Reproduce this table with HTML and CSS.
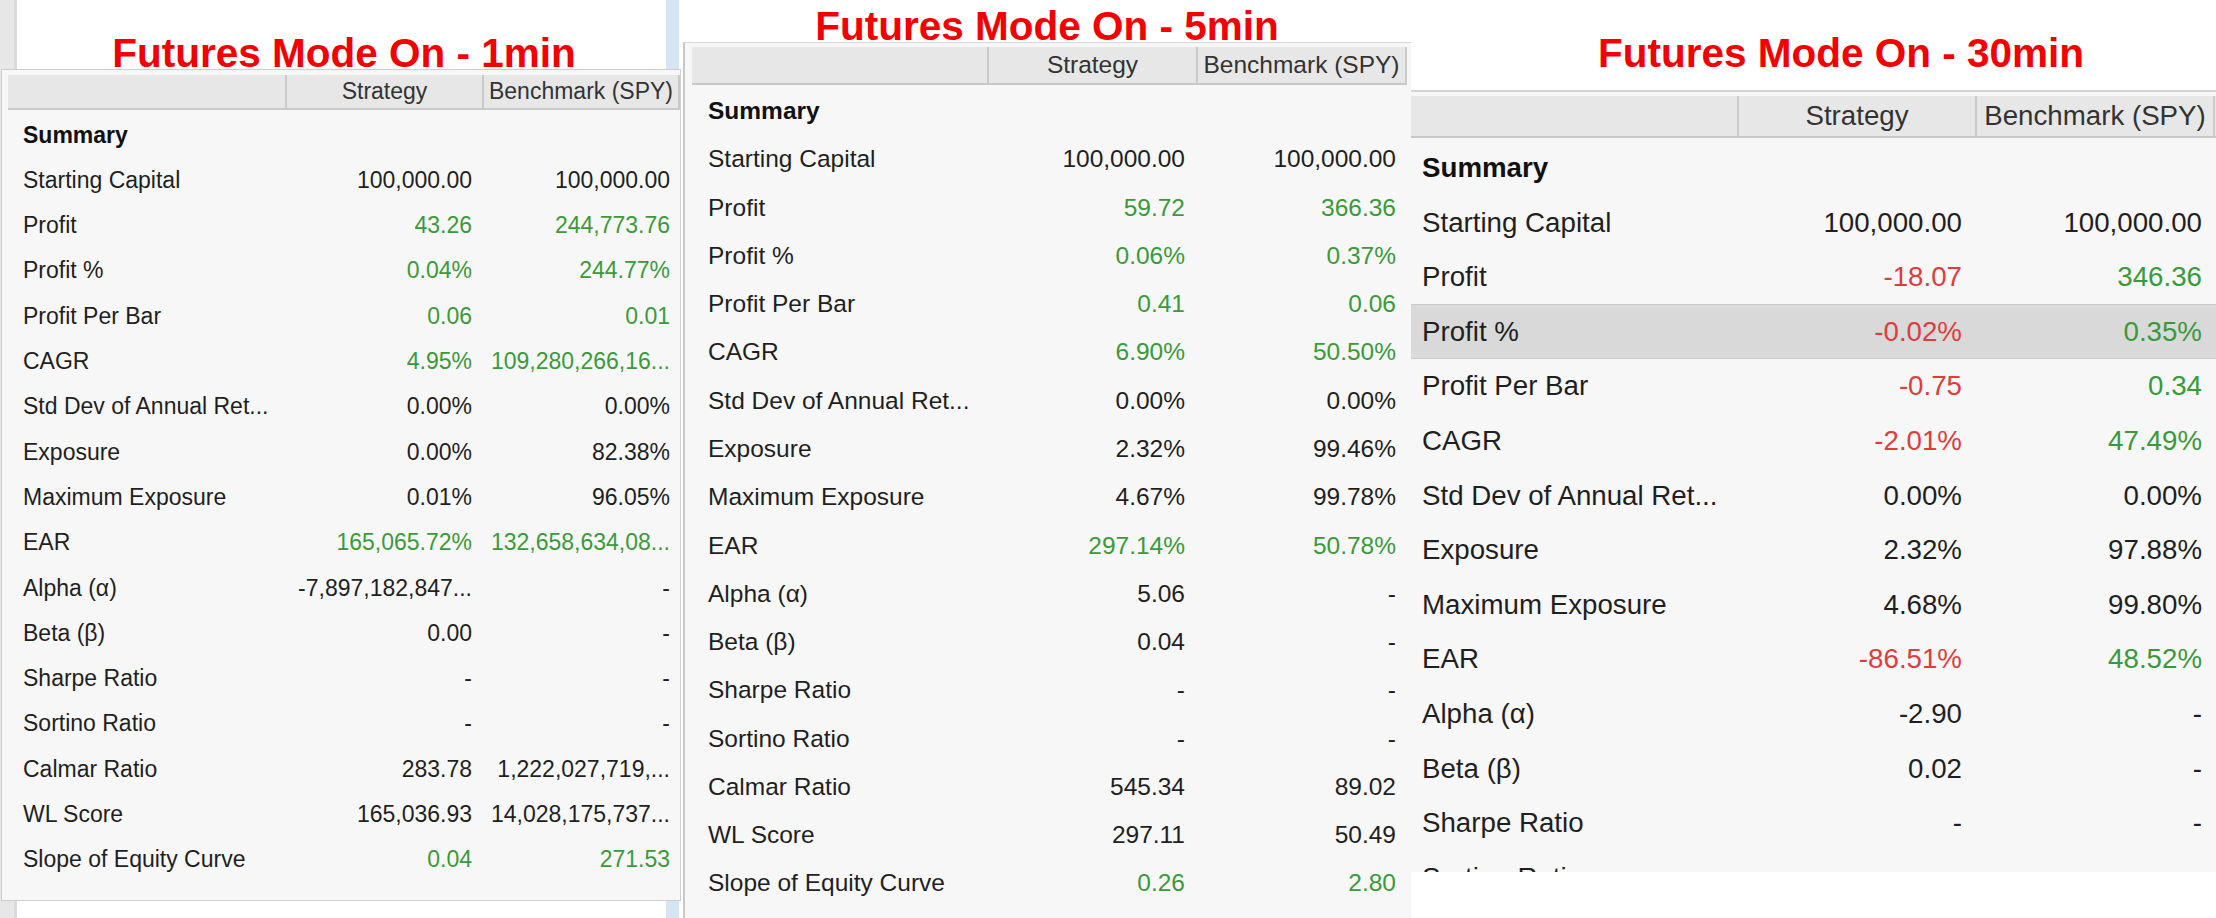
FILE: index.html
```html
<!DOCTYPE html>
<html lang="en">
<head>
<meta charset="utf-8">
<title>Futures Mode On comparison</title>
<link rel="stylesheet" href="styles.css">
</head>
<body>
<div class="collage">

  <section class="shot shot-1">
    <h2 class="shot-title">Futures Mode On - 1min</h2>
    <div class="grid">
      <div class="grid-head"><span></span><span>Strategy</span><span>Benchmark (SPY)</span></div>
      <div class="grid-body">
        <div class="row section"><span class="label">Summary</span><span></span><span></span></div>
        <div class="row"><span class="label">Starting Capital</span><span class="val">100,000.00</span><span class="val">100,000.00</span></div>
        <div class="row"><span class="label">Profit</span><span class="val pos">43.26</span><span class="val pos">244,773.76</span></div>
        <div class="row"><span class="label">Profit %</span><span class="val pos">0.04%</span><span class="val pos">244.77%</span></div>
        <div class="row"><span class="label">Profit Per Bar</span><span class="val pos">0.06</span><span class="val pos">0.01</span></div>
        <div class="row"><span class="label">CAGR</span><span class="val pos">4.95%</span><span class="val pos">109,280,266,16...</span></div>
        <div class="row"><span class="label">Std Dev of Annual Ret...</span><span class="val">0.00%</span><span class="val">0.00%</span></div>
        <div class="row"><span class="label">Exposure</span><span class="val">0.00%</span><span class="val">82.38%</span></div>
        <div class="row"><span class="label">Maximum Exposure</span><span class="val">0.01%</span><span class="val">96.05%</span></div>
        <div class="row"><span class="label">EAR</span><span class="val pos">165,065.72%</span><span class="val pos">132,658,634,08...</span></div>
        <div class="row"><span class="label">Alpha (α)</span><span class="val">-7,897,182,847...</span><span class="val">-</span></div>
        <div class="row"><span class="label">Beta (β)</span><span class="val">0.00</span><span class="val">-</span></div>
        <div class="row"><span class="label">Sharpe Ratio</span><span class="val">-</span><span class="val">-</span></div>
        <div class="row"><span class="label">Sortino Ratio</span><span class="val">-</span><span class="val">-</span></div>
        <div class="row"><span class="label">Calmar Ratio</span><span class="val">283.78</span><span class="val">1,222,027,719,...</span></div>
        <div class="row"><span class="label">WL Score</span><span class="val">165,036.93</span><span class="val">14,028,175,737...</span></div>
        <div class="row"><span class="label">Slope of Equity Curve</span><span class="val pos">0.04</span><span class="val pos">271.53</span></div>
      </div>
    </div>
  </section>

  <section class="shot shot-2">
    <h2 class="shot-title">Futures Mode On - 5min</h2>
    <div class="grid">
      <div class="grid-head"><span></span><span>Strategy</span><span>Benchmark (SPY)</span></div>
      <div class="grid-body">
        <div class="row section"><span class="label">Summary</span><span></span><span></span></div>
        <div class="row"><span class="label">Starting Capital</span><span class="val">100,000.00</span><span class="val">100,000.00</span></div>
        <div class="row"><span class="label">Profit</span><span class="val pos">59.72</span><span class="val pos">366.36</span></div>
        <div class="row"><span class="label">Profit %</span><span class="val pos">0.06%</span><span class="val pos">0.37%</span></div>
        <div class="row"><span class="label">Profit Per Bar</span><span class="val pos">0.41</span><span class="val pos">0.06</span></div>
        <div class="row"><span class="label">CAGR</span><span class="val pos">6.90%</span><span class="val pos">50.50%</span></div>
        <div class="row"><span class="label">Std Dev of Annual Ret...</span><span class="val">0.00%</span><span class="val">0.00%</span></div>
        <div class="row"><span class="label">Exposure</span><span class="val">2.32%</span><span class="val">99.46%</span></div>
        <div class="row"><span class="label">Maximum Exposure</span><span class="val">4.67%</span><span class="val">99.78%</span></div>
        <div class="row"><span class="label">EAR</span><span class="val pos">297.14%</span><span class="val pos">50.78%</span></div>
        <div class="row"><span class="label">Alpha (α)</span><span class="val">5.06</span><span class="val">-</span></div>
        <div class="row"><span class="label">Beta (β)</span><span class="val">0.04</span><span class="val">-</span></div>
        <div class="row"><span class="label">Sharpe Ratio</span><span class="val">-</span><span class="val">-</span></div>
        <div class="row"><span class="label">Sortino Ratio</span><span class="val">-</span><span class="val">-</span></div>
        <div class="row"><span class="label">Calmar Ratio</span><span class="val">545.34</span><span class="val">89.02</span></div>
        <div class="row"><span class="label">WL Score</span><span class="val">297.11</span><span class="val">50.49</span></div>
        <div class="row"><span class="label">Slope of Equity Curve</span><span class="val pos">0.26</span><span class="val pos">2.80</span></div>
      </div>
    </div>
  </section>

  <section class="shot shot-3">
    <h2 class="shot-title">Futures Mode On - 30min</h2>
    <div class="grid">
      <div class="grid-head"><span></span><span>Strategy</span><span>Benchmark (SPY)</span></div>
      <div class="grid-body">
        <div class="row section"><span class="label">Summary</span><span></span><span></span></div>
        <div class="row"><span class="label">Starting Capital</span><span class="val">100,000.00</span><span class="val">100,000.00</span></div>
        <div class="row"><span class="label">Profit</span><span class="val neg">-18.07</span><span class="val pos">346.36</span></div>
        <div class="row hl"><span class="label">Profit %</span><span class="val neg">-0.02%</span><span class="val pos">0.35%</span></div>
        <div class="row"><span class="label">Profit Per Bar</span><span class="val neg">-0.75</span><span class="val pos">0.34</span></div>
        <div class="row"><span class="label">CAGR</span><span class="val neg">-2.01%</span><span class="val pos">47.49%</span></div>
        <div class="row"><span class="label">Std Dev of Annual Ret...</span><span class="val">0.00%</span><span class="val">0.00%</span></div>
        <div class="row"><span class="label">Exposure</span><span class="val">2.32%</span><span class="val">97.88%</span></div>
        <div class="row"><span class="label">Maximum Exposure</span><span class="val">4.68%</span><span class="val">99.80%</span></div>
        <div class="row"><span class="label">EAR</span><span class="val neg">-86.51%</span><span class="val pos">48.52%</span></div>
        <div class="row"><span class="label">Alpha (α)</span><span class="val">-2.90</span><span class="val">-</span></div>
        <div class="row"><span class="label">Beta (β)</span><span class="val">0.02</span><span class="val">-</span></div>
        <div class="row"><span class="label">Sharpe Ratio</span><span class="val">-</span><span class="val">-</span></div>
        <div class="row"><span class="label">Sortino Ratio</span><span class="val">-</span><span class="val">-</span></div>
      </div>
    </div>
  </section>

</div>
</body>
</html>
```

FILE: styles.css
```css
html, body {
  margin: 0;
  padding: 0;
  height: 100%;
  overflow: hidden;
  background: #ffffff;
}

body {
  font-family: "Liberation Sans", Arial, sans-serif;
  color: #1f1f1f;
}

.collage {
  display: flex;
  height: 918px;
}

.shot {
  display: flex;
  flex-direction: column;
  flex: none;
}

/* per-screenshot scale */
.shot-1 {
  width: 683px;
  --fs: 23px;
  --hdr: 35px;
  --row: 45.3px;
  --c1: 277px;
  --c2: 197px;
  --c3: 198px;
  --pl: 15px;
  --pr: 10px;
  --gap: 2.4px;
  background: linear-gradient(to right,
    #e7e7e7 0, #e7e7e7 14px,
    #dadada 14px, #dadada 17px,
    #ffffff 17px, #ffffff 666px,
    #d5e5f2 666px, #d5e5f2 679px,
    #ffffff 679px);
}

.shot-2 {
  width: 728px;
  --fs: 24.5px;
  --hdr: 38px;
  --row: 48.27px;
  --c1: 295px;
  --c2: 209px;
  --c3: 211px;
  --pl: 16px;
  --pr: 11px;
  --gap: 2px;
}

.shot-3 {
  width: 805px;
  --fs: 27.7px;
  --hdr: 42px;
  --row: 54.6px;
  --c1: 326px;
  --c2: 238px;
  --c3: 240px;
  --pl: 11px;
  --pr: 13px;
  --gap: 2.7px;
}

.shot-title {
  margin: 0;
  box-sizing: border-box;
  flex: none;
  font: bold 40.5px/31px "Liberation Sans", Arial, sans-serif;
  color: #f40000;
  text-align: center;
  white-space: nowrap;
}

.shot-1 .shot-title { height: 69px; padding: 38px 0 0 5px; }
.shot-2 .shot-title { height: 42px; padding-top: 11px; }
.shot-3 .shot-title { height: 90px; padding: 38px 0 0 55px; }

.grid {
  box-sizing: border-box;
  background: #f7f7f7;
  font-size: var(--fs);
  overflow: hidden;
}

.shot-1 .grid {
  margin-left: 1px;
  width: 680px;
  height: 832px;
  border: 1px solid #cdcdcd;
  padding: 5px 0 0 6px;
}

.shot-2 .grid {
  flex: 1;
  border-left: 2px solid #c8c8c8;
  border-top: 1px solid #d6d6d6;
  padding: 4px 4px 0 7px;
}

.shot-3 .grid {
  height: 782px;
  border-top: 2px solid #d4d4d4;
  padding-top: 4px;
}

.grid-head {
  display: grid;
  grid-template-columns: var(--c1) var(--c2) var(--c3);
  height: var(--hdr);
  box-sizing: border-box;
  background: #e7e7e7;
  border-bottom: 2px solid #c9c9c9;
  color: #333333;
}

.grid-head span {
  display: flex;
  align-items: center;
  justify-content: center;
  white-space: nowrap;
  overflow: hidden;
}

.grid-head span + span {
  border-left: 2px solid #c9c9c9;
}

.grid-head span:last-child {
  border-right: 2px solid #c9c9c9;
}

.grid-body {
  padding-top: var(--gap);
}

.row {
  display: grid;
  grid-template-columns: var(--c1) var(--c2) var(--c3);
  height: var(--row);
  align-items: center;
  white-space: nowrap;
}

.row > span {
  overflow: hidden;
}

.label {
  padding-left: var(--pl);
}

.val {
  text-align: right;
  padding-right: var(--pr);
}

.section .label {
  font-weight: bold;
  color: #111111;
}

.row.hl {
  box-sizing: border-box;
  background: #d9d9d9;
  border-top: 1px solid #cccccc;
  border-bottom: 1px solid #cccccc;
}

.pos { color: #3a9a3a; }
.neg { color: #e03c3c; }
```
